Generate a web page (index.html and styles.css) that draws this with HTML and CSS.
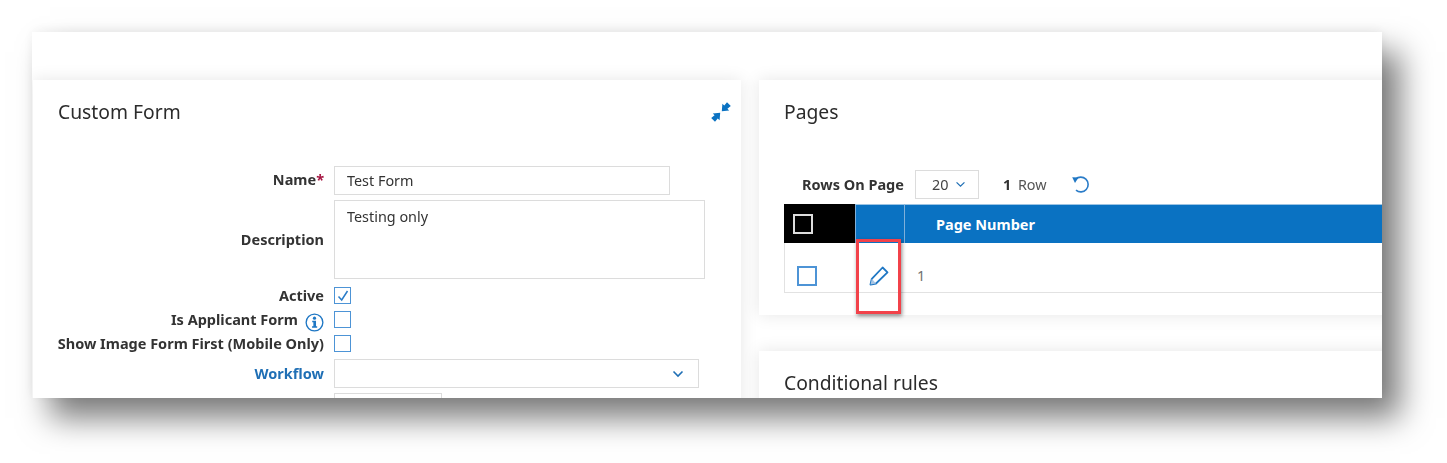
FILE: index.html
```html
<!DOCTYPE html>
<html lang="en">
<head>
<meta charset="utf-8">
<title>Custom Form</title>
<link rel="stylesheet" href="styles.css">
</head>
<body>
<main class="shot">
  <div class="columns">
    <section class="panel form-panel">
      <header class="panel-head">
        <h2 class="panel-title">Custom Form</h2>
        <svg class="pin" viewBox="0 0 20 20" width="20" height="20" aria-hidden="true">
          <path d="M19.800 4 16 .2 13.300 3.600 11.400 1.800 10.800 9.200 18.200 8.600 16.400 6.700Z" fill="#0a72c2"/>
          <path d="M.2 16 4 19.800 6.700 16.400 8.600 18.200 9.200 10.800 1.800 11.400 3.600 13.300Z" fill="#0a72c2"/>
        </svg>
      </header>
      <form class="form">
        <div class="row row-name">
          <label class="label">Name<span class="req">*</span></label>
          <div class="input input-name">Test Form</div>
        </div>
        <div class="row row-desc">
          <label class="label">Description</label>
          <div class="input input-desc">Testing only</div>
        </div>
        <div class="row row-check">
          <label class="label">Active</label>
          <span class="check">
            <svg viewBox="0 0 18 18" width="18" height="18" aria-hidden="true"><path d="M4.500 9.500 7.700 13 13.500 4" fill="none" stroke="#2a7cc8" stroke-width="1.500"/></svg>
          </span>
        </div>
        <div class="row row-check">
          <label class="label">Is Applicant Form
            <svg class="info" viewBox="0 0 20 20" width="19" height="19" aria-hidden="true">
              <circle cx="10" cy="10" r="8.800" fill="none" stroke="#1f77c4" stroke-width="1.400"/>
              <circle cx="10" cy="5.400" r="1.700" fill="#1f77c4"/>
              <path d="M7.600 8.200H11.600V14H12.800V15.600H7.400V14H8.800V9.700H7.600Z" fill="#1f77c4"/>
            </svg>
          </label>
          <span class="check"></span>
        </div>
        <div class="row row-check">
          <label class="label">Show Image Form First (Mobile Only)</label>
          <span class="check"></span>
        </div>
        <div class="row row-select">
          <label class="label label-link">Workflow</label>
          <div class="input input-select">
            <svg viewBox="0 0 12 8" width="12" height="8" aria-hidden="true"><path d="M1.500 1.500 6 6 10.500 1.500" fill="none" stroke="#1f6fb5" stroke-width="1.600"/></svg>
          </div>
        </div>
        <div class="row row-last">
          <span></span>
          <div class="input input-last"></div>
        </div>
      </form>
    </section>
    <div class="side">
      <section class="panel pages-panel">
        <h2 class="panel-title">Pages</h2>
        <div class="toolbar">
          <span class="rows-label">Rows On Page</span>
          <span class="rows-select">20
            <svg viewBox="0 0 12 8" width="11" height="7" aria-hidden="true"><path d="M1.500 1.500 6 6 10.500 1.500" fill="none" stroke="#1f6fb5" stroke-width="1.400"/></svg>
          </span>
          <span class="row-count"><b>1</b> Row</span>
          <svg class="refresh" viewBox="0 0 20 20" width="20" height="20" aria-hidden="true">
            <path d="M5.600 5.200A7.400 7.400 0 1 1 6 16.200" fill="none" stroke="#2a7cc8" stroke-width="1.600"/>
            <path d="M2.200 3.200 8.500 3.500 5 9Z" fill="#1f77c4"/>
          </svg>
        </div>
        <div class="table">
          <div class="th th-check"><span class="box box-dark"></span></div>
          <div class="th th-edit"></div>
          <div class="th th-main">Page Number</div>
          <div class="td td-check"><span class="box box-light"></span></div>
          <div class="td td-edit">
            <svg viewBox="0 0 20 20" width="20" height="20" aria-hidden="true">
              <path d="M13.600 1.500 18.500 6.400 7 17.500 1.500 18.500 2.800 12.800Z" fill="none" stroke="#1f77c4" stroke-width="1.800" stroke-linejoin="round"/>
              <path d="M2.800 12.800 7 17.500 1.500 18.500Z" fill="#a9c6e4"/>
            </svg>
          </div>
          <div class="td td-main">1</div>
          <div class="callout"></div>
        </div>
      </section>
      <section class="panel rules-panel">
        <h2 class="panel-title">Conditional rules</h2>
      </section>
    </div>
  </div>
</main>
</body>
</html>
```
FILE: styles.css
```css
* { box-sizing: border-box; }
html, body { margin: 0; height: 463px; background: #fff; overflow: hidden; }
body { padding: 32px 0 0 32px; font-family: "Noto Sans", "Liberation Sans", sans-serif; color: #333; }

.shot {
  width: 1350px;
  height: 366px;
  padding: 48px 0 0 1px;
  overflow: hidden;
  background: #fff;
  box-shadow: 18px 20px 30px rgba(0,0,0,.52), 0 -2px 12px rgba(0,0,0,.06);
  filter: blur(.3px);
}
.columns { display: grid; grid-template-columns: 708px 660px; column-gap: 18px; }

.panel { background: #fff; box-shadow: 0 0 16px rgba(0,0,0,.1); }
.panel-title { margin: 0; font-size: 19.300px; line-height: 26px; font-weight: 400; color: #2b2b2b; }

.form-panel { height: 340px; padding: 19px 0 0 25px; }
.panel-head { display: flex; justify-content: space-between; align-items: center; padding-right: 10px; }
.pin { display: block; }

.form { margin-top: 41px; font-size: 14.400px; display: flex; flex-direction: column; }
.row { display: grid; grid-template-columns: 266px 1fr; column-gap: 10px; align-items: center; }
.row-desc { margin-top: 5px; margin-bottom: 1px; }
.row-check { margin-top: 7px; height: 17px; grid-template-rows: 17px; }
.row-select { margin-top: 7px; }
.row-last { margin-top: 5px; }

.label { display: flex; align-items: center; justify-content: flex-end; font-size: 14.500px; line-height: 17px; font-weight: 700; color: #333; white-space: nowrap; }
.row-name .label { padding-bottom: 2px; }
.row-desc .label { padding-bottom: 1px; }
.label-link { color: #1f6fb5; }
.req { color: #a4123f; }
.info { margin: 2px 0 -3px 7px; flex: none; }

.input { background: #fff; border: 1px solid #dcdcdc; padding: 0 12px; color: #333; }
.input-name { width: 336px; height: 29px; display: flex; align-items: center; }
.input-desc { width: 371px; height: 79px; padding-top: 6px; }
.input-select { width: 365px; height: 29px; display: flex; align-items: center; justify-content: flex-end; padding-right: 14px; }
.input-last { width: 108px; height: 30px; }

.check { width: 17px; height: 17px; border: 1px solid #4d94d6; background: #fff; display: block; }
.check svg { display: block; margin: -1px; }

.side { display: flex; flex-direction: column; row-gap: 36px; }
.pages-panel { height: 235px; padding: 19px 0 0 25px; }
.toolbar { display: flex; align-items: center; height: 30px; margin-top: 44px; margin-bottom: 5px; padding-left: 18px; font-size: 14.400px; }
.rows-label { font-size: 14.500px; font-weight: 700; color: #333; }
.rows-select { display: flex; align-items: center; justify-content: space-between; width: 64px; height: 29px; margin-left: 11px; padding: 0 12px 0 16px; border: 1px solid #dcdcdc; color: #444; }
.row-count { margin-left: 24px; color: #555; }
.row-count b { color: #333; margin-right: 3px; }
.refresh { margin-left: 23px; }

.table {
  position: relative;
  display: grid;
  grid-template-columns: 71px 49px 1fr;
  grid-template-rows: 39px 50px;
}
.th { display: flex; align-items: center; border-top: 1px solid #9cc4e4; }
.th-check { background: #000; padding-left: 9px; border-top-color: #000; }
.th-edit { background: #0a72c2; border-left: 1px solid #7fb0da; }
.th-main { background: #0a72c2; border-left: 1px solid #7fb0da; padding-left: 31px; font-size: 14.500px; font-weight: 700; color: #fff; }
.td { display: flex; align-items: center; padding-top: 16px; border-bottom: 1px solid #e2e2e2; background: #fff; }
.td-check { padding-left: 12px; border-left: 1px solid #e2e2e2; }
.td-edit { justify-content: center; padding-right: 1px; }
.td-main { padding-left: 13px; font-size: 14.400px; color: #707070; }
.box { display: block; width: 20px; height: 20px; border: 2px solid #ddd; }
.box-dark { background: #000; }
.box-light { background: #fff; border-color: #4d94d6; }
.callout { position: absolute; left: 72px; top: 35px; width: 45px; height: 75px; border: 3px solid #f2424a; box-shadow: 1px 2px 4px rgba(0,0,0,.45); }

.rules-panel { height: 80px; padding: 19px 0 0 25px; }
```
